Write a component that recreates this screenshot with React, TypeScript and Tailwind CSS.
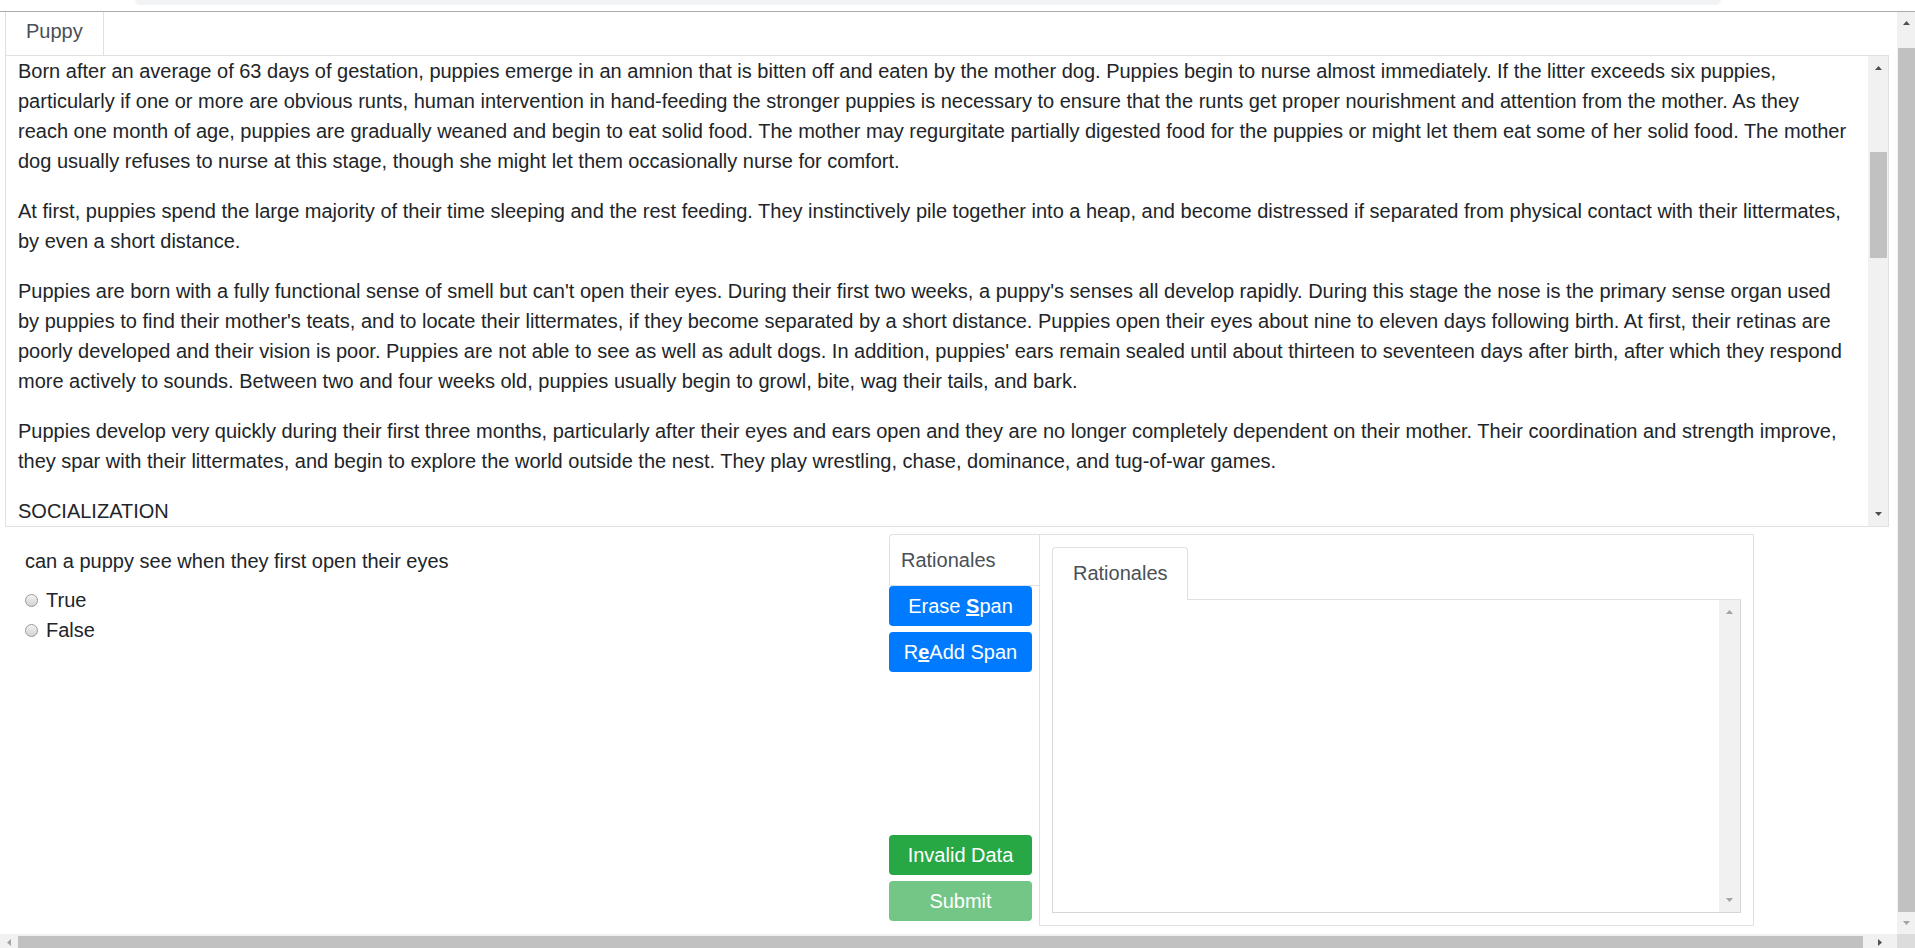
import React from 'react'

const paragraphs = [
  'Born after an average of 63 days of gestation, puppies emerge in an amnion that is bitten off and eaten by the mother dog. Puppies begin to nurse almost immediately. If the litter exceeds six puppies, particularly if one or more are obvious runts, human intervention in hand-feeding the stronger puppies is necessary to ensure that the runts get proper nourishment and attention from the mother. As they reach one month of age, puppies are gradually weaned and begin to eat solid food. The mother may regurgitate partially digested food for the puppies or might let them eat some of her solid food. The mother dog usually refuses to nurse at this stage, though she might let them occasionally nurse for comfort.',
  'At first, puppies spend the large majority of their time sleeping and the rest feeding. They instinctively pile together into a heap, and become distressed if separated from physical contact with their littermates, by even a short distance.',
  "Puppies are born with a fully functional sense of smell but can't open their eyes. During their first two weeks, a puppy's senses all develop rapidly. During this stage the nose is the primary sense organ used by puppies to find their mother's teats, and to locate their littermates, if they become separated by a short distance. Puppies open their eyes about nine to eleven days following birth. At first, their retinas are poorly developed and their vision is poor. Puppies are not able to see as well as adult dogs. In addition, puppies' ears remain sealed until about thirteen to seventeen days after birth, after which they respond more actively to sounds. Between two and four weeks old, puppies usually begin to growl, bite, wag their tails, and bark.",
  'Puppies develop very quickly during their first three months, particularly after their eyes and ears open and they are no longer completely dependent on their mother. Their coordination and strength improve, they spar with their littermates, and begin to explore the world outside the nest. They play wrestling, chase, dominance, and tug-of-war games.'
]

// little scrollbar arrows
const Arrow = ({ dir, color }: { dir: 'up' | 'down' | 'left' | 'right'; color: string }) => {
  const pts = {
    up: '0,4 3.5,0 7,4',
    down: '0,0 3.5,4 7,0',
    left: '4,0 0,3.5 4,7',
    right: '0,0 4,3.5 0,7'
  }[dir]
  const w = dir === 'up' || dir === 'down' ? 7 : 4
  const h = dir === 'up' || dir === 'down' ? 4 : 7
  return (
    <svg width={w} height={h} viewBox={`0 0 ${w} ${h}`}>
      <polygon points={pts} fill={color} />
    </svg>
  )
}

const Radio = ({ label }: { label: string }) => (
  <label className="flex items-center h-[30px]">
    <span className="w-[13px] h-[13px] rounded-full border border-[#9a9a9a] bg-linear-to-b from-[#f3f3f3] to-[#d2d2d2] mr-[8px]" />
    <span>{label}</span>
  </label>
)

const App: React.FC = () => {
  return (
    <div
      className="w-[1915px] h-[948px] overflow-hidden flex flex-col bg-white text-[#212529] text-[20px] leading-[30px]"
      style={{ fontFamily: '"Liberation Sans", Arial, sans-serif' }}
    >
      {/* top strip */}
      <div className="h-[12px] border-b border-[#ababab] shrink-0">
        <div className="ml-[135px] w-[1586px] h-[5px] bg-[#f1f3f4] rounded-b-[6px]" />
      </div>

      <div className="flex flex-1 min-h-0">
        <div className="flex-1 min-w-0 overflow-hidden">
          {/* Puppy tab */}
          <div className="flex ml-[5px]">
            <div className="h-[43px] border-x border-[#dee2e6] px-5 pt-[4px] text-[#495057]">Puppy</div>
          </div>

          {/* passage */}
          <div className="ml-[5px] w-[1884px] h-[472px] border border-[#dee2e6] flex">
            <div className="flex-1 min-w-0 overflow-hidden pl-3 pr-[17px]">
              {paragraphs.map((p, i) => (
                <p key={i} className="mb-5">
                  {p}
                </p>
              ))}
              <p className="mb-5">SOCIALIZATION</p>
            </div>
            <div className="w-[20px] bg-[#f1f1f1] flex flex-col items-center">
              <div className="h-[24px] flex items-center justify-center">
                <Arrow dir="up" color="#505050" />
              </div>
              <div className="mt-[72px] w-[17px] h-[106px] bg-[#c1c1c1]" />
              <div className="flex-1" />
              <div className="h-[24px] flex items-center justify-center">
                <Arrow dir="down" color="#505050" />
              </div>
            </div>
          </div>

          {/* question + rationales */}
          <div className="flex ml-[5px]">
            <div className="w-[884px] px-5 pt-[19px]">
              <div className="mb-[9px]">can a puppy see when they first open their eyes</div>
              <Radio label="True" />
              <Radio label="False" />
            </div>

            <div className="flex mt-[7px]">
              <div className="w-[150px] flex flex-col pb-[5px]">
                <div className="border-t border-l border-b border-[#dee2e6] rounded-tl-[4px] px-[11px] py-[10px] text-[#495057]">
                  Rationales
                </div>
                <div className="flex flex-col gap-[6px]">
                  <button className="w-[143px] h-[40px] rounded-[4px] bg-[#007bff] text-white">
                    Erase <u className="font-bold">S</u>pan
                  </button>
                  <button className="w-[143px] h-[40px] rounded-[4px] bg-[#007bff] text-white">
                    R<u className="font-bold">e</u>Add Span
                  </button>
                </div>
                <div className="flex-1" />
                <div className="flex flex-col gap-[6px]">
                  <button className="w-[143px] h-[40px] rounded-[4px] bg-[#28a745] text-white">Invalid Data</button>
                  <button className="w-[143px] h-[40px] rounded-[4px] bg-[#73c686] text-white">Submit</button>
                </div>
              </div>

              <div className="w-[715px] h-[392px] border border-[#dee2e6] p-3 flex flex-col">
                <div className="flex">
                  <div className="w-[136px] h-[53px] border-t border-x border-[#dee2e6] rounded-t-[4px] px-5 py-[10px] text-[#495057]">
                    Rationales
                  </div>
                  <div className="flex-1 border-b border-[#dee2e6]" />
                </div>
                <div className="flex-1 border-x border-b border-[#d6d6d6] flex justify-end">
                  <div className="w-[21px] bg-[#f1f1f1] flex flex-col">
                    <div className="h-[24px] flex items-center justify-center">
                      <Arrow dir="up" color="#a3a3a3" />
                    </div>
                    <div className="flex-1" />
                    <div className="h-[24px] flex items-center justify-center">
                      <Arrow dir="down" color="#a3a3a3" />
                    </div>
                  </div>
                </div>
              </div>
            </div>
          </div>
        </div>

        {/* page vertical scrollbar */}
        <div className="w-[18px] bg-[#f1f1f1] flex flex-col items-end">
          <div className="w-full h-[22px] flex items-center justify-center">
            <Arrow dir="up" color="#505050" />
          </div>
          <div className="mt-[14px] w-[17px] h-[865px] bg-[#c1c1c1]" />
          <div className="flex-1" />
          <div className="w-full h-[22px] flex items-center justify-center">
            <Arrow dir="down" color="#a3a3a3" />
          </div>
        </div>
      </div>

      {/* page horizontal scrollbar */}
      <div className="h-[14px] shrink-0 flex bg-[#f1f1f1]">
        <div className="w-[18px] flex items-center justify-center pt-[3px]">
          <Arrow dir="left" color="#a3a3a3" />
        </div>
        <div className="w-[1845px] mt-[2px] bg-[#c1c1c1]" />
        <div className="flex-1 flex items-center justify-center pt-[3px]">
          <Arrow dir="right" color="#505050" />
        </div>
        <div className="w-[18px] bg-[#dcdcdc]" />
      </div>
    </div>
  )
}

export default App
